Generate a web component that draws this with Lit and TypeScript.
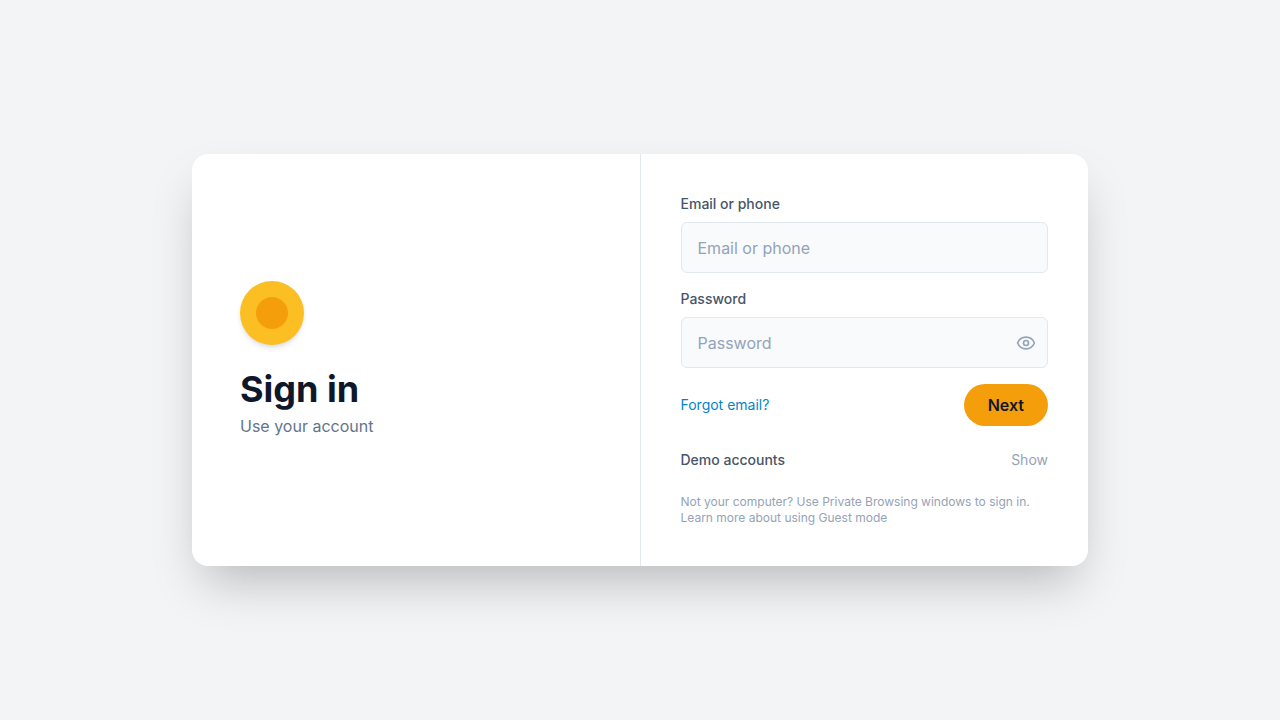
import { LitElement, html, css } from "lit";
import { customElement, state } from "lit/decorators.js";

@customElement("app-root")
export class AppRoot extends LitElement {
  @state() private reveal = false;
  @state() private demos = false;

  static styles = css`
    :host {
      display: block;
      font-family: Inter, "Liberation Sans", sans-serif;
      font-size: 16px;
      line-height: 26px;
      color: #0f172a;
      -webkit-font-smoothing: antialiased;
    }
    *, *::before, *::after { box-sizing: border-box; }
    h1, p { margin: 0; }
    button, input { font: inherit; }
    button { border: 0; background: none; padding: 0; cursor: pointer; }
    .page {
      min-height: 100vh;
      display: flex;
      align-items: center;
      justify-content: center;
      padding: 16px;
      background: #f3f4f6;
    }
    .card {
      width: 100%;
      max-width: 896px;
      display: grid;
      grid-template-columns: 1fr 1px 1fr;
      background: #fff;
      border-radius: 16px;
      box-shadow: 0 25px 50px -12px rgb(0 0 0 / 0.25);
    }
    .divider { background: #e2e8f0; }
    .brand {
      display: flex;
      flex-direction: column;
      justify-content: center;
      padding: 48px;
    }
    .logo {
      width: 64px;
      height: 64px;
      margin-bottom: 24px;
      display: grid;
      place-items: center;
      border-radius: 50%;
      background: #fbbf24;
      box-shadow: 0 4px 6px -1px rgb(0 0 0 / 0.1), 0 2px 4px -2px rgb(0 0 0 / 0.1);
    }
    .core { width: 32px; height: 32px; border-radius: 50%; background: #f59e0b; }
    .title { font-size: 36px; line-height: 40px; font-weight: 700; margin-bottom: 4px; }
    .subtitle { color: #64748b; }
    .form {
      padding: 40px;
      font-size: 14px;
      line-height: 20px;
    }
    .label { display: block; margin-bottom: 8px; font-weight: 500; color: #475569; }
    .field { position: relative; margin-bottom: 16px; }
    .input {
      display: block;
      width: 100%;
      height: 51px;
      padding: 12px 16px;
      font-size: 16px;
      color: #0f172a;
      border: 1px solid #e2e8f0;
      border-radius: 6px;
      background: #f8fafc;
    }
    .input::placeholder { color: #94a3b8; opacity: 1; }
    .secret { padding-right: 48px; }
    .eye { position: absolute; right: 12px; top: 0; bottom: 0; display: flex; align-items: center; color: #94a3b8; }
    .row { display: flex; align-items: center; justify-content: space-between; }
    .link { color: #0284c7; text-decoration: none; }
    .next {
      padding: 8px 24px;
      border-radius: 999px;
      background: #f59e0b;
      color: #0f172a;
      font-size: 16px;
      line-height: 26px;
      font-weight: 600;
    }
    .demo { margin-top: 24px; color: #475569; }
    .demo-title { font-weight: 500; }
    .show { color: #94a3b8; }
    .note { margin-top: 24px; font-size: 12px; line-height: 16px; color: #94a3b8; }
  `;

  render() {
    return html`
      <main class="page">
        <div class="card">
          <section class="brand">
            <div class="logo"><div class="core"></div></div>
            <h1 class="title">Sign in</h1>
            <p class="subtitle">Use your account</p>
          </section>
          <div class="divider"></div>
          <form class="form" @submit=${(e: Event) => e.preventDefault()}>
            <label class="label" for="email">Email or phone</label>
            <div class="field">
              <input class="input" id="email" type="text" placeholder="Email or phone" />
            </div>
            <label class="label" for="password">Password</label>
            <div class="field">
              <input class="input secret" id="password" type=${this.reveal ? "text" : "password"} placeholder="Password" />
              <button class="eye" type="button" aria-label="Show password" @click=${() => (this.reveal = !this.reveal)}>
                <svg width="20" height="20" viewBox="0 0 24 24" fill="none" stroke="currentColor" stroke-width="2" stroke-linecap="round" stroke-linejoin="round">
                  <path d="M2.062 12.348a1 1 0 0 1 0-.696 10.75 10.75 0 0 1 19.876 0 1 1 0 0 1 0 .696 10.75 10.75 0 0 1-19.876 0" />
                  <circle cx="12" cy="12" r="3" />
                </svg>
              </button>
            </div>
            <div class="row">
              <a class="link" href="#">Forgot email?</a>
              <button class="next" type="submit">Next</button>
            </div>
            <div class="row demo">
              <span class="demo-title">Demo accounts</span>
              <button class="show" type="button" @click=${() => (this.demos = !this.demos)}>${this.demos ? "Hide" : "Show"}</button>
            </div>
            <p class="note">Not your computer? Use Private Browsing windows to sign in. Learn more about using Guest mode</p>
          </form>
        </div>
      </main>
    `;
  }
}
